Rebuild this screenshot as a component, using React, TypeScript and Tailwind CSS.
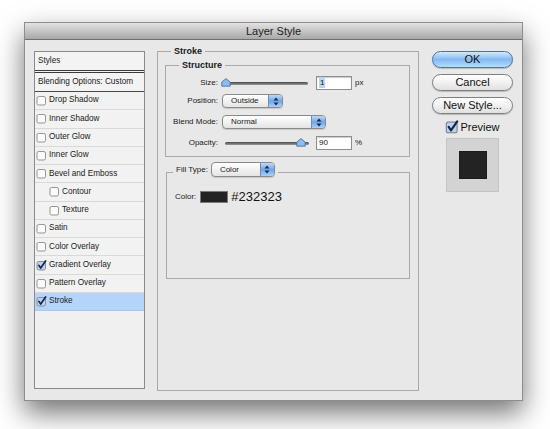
import React from 'react';

const effects = [
  { label: 'Drop Shadow' },
  { label: 'Inner Shadow' },
  { label: 'Outer Glow' },
  { label: 'Inner Glow' },
  { label: 'Bevel and Emboss' },
  { label: 'Contour', indent: true },
  { label: 'Texture', indent: true },
  { label: 'Satin' },
  { label: 'Color Overlay' },
  { label: 'Gradient Overlay', checked: true },
  { label: 'Pattern Overlay' },
  { label: 'Stroke', checked: true, selected: true },
];

function CheckBox({ checked, big }: { checked?: boolean; big?: boolean }) {
  const s = big ? 14 : 11;
  return (
    <svg width={s} height={s} viewBox="0 0 11 11" className="shrink-0">
      <rect
        x="1"
        y="1.5"
        width="8.5"
        height="8.5"
        rx="1.6"
        fill={checked ? '#b9d3f3' : '#fbfbfb'}
        stroke="#7c7c7c"
        strokeWidth="0.8"
      />
      {checked && (
        <path
          d="M2.9 5.4 L4.7 8.1 L9.6 1"
          fill="none"
          stroke="#14254f"
          strokeWidth="1.7"
          strokeLinecap="round"
          strokeLinejoin="round"
        />
      )}
    </svg>
  );
}

function Popup({ value, className }: { value: string; className: string }) {
  return (
    <div
      className={`flex items-stretch rounded-[4px] border border-[#8a8a8a] bg-gradient-to-b from-white to-[#e4e4e4] shadow-[0_1px_1px_rgba(0,0,0,0.15)] ${className}`}
    >
      <span className="flex flex-1 items-center pl-[8px] text-[8px] text-[#1a1a1a]">{value}</span>
      <span className="flex w-[14px] items-center justify-center rounded-r-[3px] border-l border-[#6f8db5] bg-gradient-to-b from-[#bcd9f8] via-[#6ea6ea] to-[#a9d0f8]">
        <svg width="6" height="9" viewBox="0 0 6 9">
          <path d="M3 0.5 L5.5 3.5 H0.5 Z" fill="#1b2a44" />
          <path d="M3 8.5 L5.5 5.5 H0.5 Z" fill="#1b2a44" />
        </svg>
      </span>
    </div>
  );
}

function Slider({ className, at }: { className: string; at: string }) {
  return (
    <div className={`relative flex h-[14px] items-center ${className}`}>
      <div className="h-[3px] w-full rounded-full bg-gradient-to-b from-[#4a4a4a] to-[#9a9a9a]" />
      <svg width="10" height="9" viewBox="0 0 10 9" className={`absolute top-[2px] ${at}`}>
        <path
          d="M5 0.6 L9.2 4 V8.2 H0.8 V4 Z"
          fill="#8fbcf0"
          stroke="#41679b"
          strokeWidth="0.8"
          strokeLinejoin="round"
        />
      </svg>
    </div>
  );
}

function NumField({ value, selected }: { value: string; selected?: boolean }) {
  return (
    <div className="flex h-[14px] w-[36px] items-center border border-[#8e8e8e] bg-white pl-[2px] shadow-[inset_0_1px_1px_rgba(0,0,0,0.2)]">
      <span className={`text-[8px] leading-[10px] text-[#111] ${selected ? 'bg-[#b5d5ff] px-[1px]' : ''}`}>{value}</span>
    </div>
  );
}

function AquaButton({ children, primary }: { children: React.ReactNode; primary?: boolean }) {
  return (
    <button
      className={`flex h-[17px] w-[81px] items-center justify-center rounded-full border text-[11px] leading-none text-[#111] shadow-[0_1px_1px_rgba(0,0,0,0.2)] ${
        primary
          ? 'border-[#4d72a6] bg-gradient-to-b from-[#d6e9fc] via-[#84b9f0] to-[#b6dcfc]'
          : 'border-[#7f7f7f] bg-gradient-to-b from-white via-[#f1f1f1] to-[#e0e0e0]'
      }`}
    >
      {children}
    </button>
  );
}

export default function App() {
  return (
    <div className="h-[429px] w-[550px] bg-white pl-[24px] pt-[22px] font-['Liberation_Sans',Arial,sans-serif]">
      <div className="flex h-[379px] w-[499px] flex-col border border-[#8d8d8d] bg-[#e8e8e8] shadow-[0_12px_26px_rgba(0,0,0,0.55)]">
        {/* Title bar */}
        <div className="flex h-[17px] items-center justify-center border-b border-[#6f6f6f] bg-gradient-to-b from-[#e2e2e2] to-[#a9a9a9] text-[11px] text-[#1c1c1c]">
          Layer Style
        </div>

        <div className="flex items-start pl-[9px]">
          {/* Styles list */}
          <div className="mt-[11px] flex h-[338px] w-[111px] flex-col border border-[#8a8a8a] bg-[#f0f0f0] text-[8.2px] text-[#1a1a1a]">
            <div className="flex h-[21px] items-center border-b-[3px] border-double border-[#3a3a3a] bg-[#f3f3f3] pl-[3px]">
              Styles
            </div>
            <div className="flex h-[19px] items-center border-b border-[#4a4a4a] bg-[#f3f3f3] pl-[3px]">
              Blending Options: Custom
            </div>
            {effects.map((e) => (
              <div
                key={e.label}
                className={`flex h-[18.27px] items-center gap-[2px] border-b ${
                  e.selected ? 'border-[#a8c8f0] bg-[#b5d4fb]' : 'border-[#d9d9d9] bg-[#f2f2f2]'
                } ${e.indent ? 'pl-[14px]' : 'pl-[1px]'}`}
              >
                <CheckBox checked={e.checked} />
                <span>{e.label}</span>
              </div>
            ))}
          </div>

          {/* Stroke */}
          <fieldset className="ml-[12px] mt-[6px] h-[345px] w-[262px] border border-[#a9a9a9] px-[7px]">
            <legend className="ml-[6px] px-[3px] text-[9px] font-bold leading-[11px] text-[#1a1a1a]">Stroke</legend>

            <fieldset className="mt-[3px] h-[97px] w-[245px] border border-[#a9a9a9] p-0">
              <legend className="ml-[13px] px-[3px] text-[9px] font-bold leading-[11px] text-[#1a1a1a]">
                Structure
              </legend>
              <div className="flex flex-col pt-[5px] text-[8px] text-[#1a1a1a]">
                <div className="flex h-[14px] items-center">
                  <span className="w-[53px] pr-[1px] text-right">Size:</span>
                  <Slider className="ml-[3px] w-[86px]" at="left-[-1px]" />
                  <div className="ml-[8px]">
                    <NumField value="1" selected />
                  </div>
                  <span className="ml-[3px]">px</span>
                </div>
                <div className="mt-[4px] flex h-[14px] items-center">
                  <span className="w-[53px] pr-[1px] text-right">Position:</span>
                  <Popup value="Outside" className="ml-[3px] h-[14px] w-[61px]" />
                </div>
                <div className="mt-[7px] flex h-[14px] items-center">
                  <span className="w-[53px] pr-[1px] text-right">Blend Mode:</span>
                  <Popup value="Normal" className="ml-[3px] h-[14px] w-[104px]" />
                </div>
                <div className="mt-[7px] flex h-[14px] items-center">
                  <span className="w-[53px] pr-[1px] text-right">Opacity:</span>
                  <Slider className="ml-[6px] w-[84px]" at="left-[71px]" />
                  <div className="ml-[7px]">
                    <NumField value="90" />
                  </div>
                  <span className="ml-[3px]">%</span>
                </div>
              </div>
            </fieldset>

            <fieldset className="ml-[1px] mt-[5px] h-[117px] w-[244px] border border-[#a9a9a9] p-0">
              <legend className="ml-[6px] flex items-center gap-[3px] px-[3px] pb-[5px] text-[8px] text-[#1a1a1a]">
                <span>Fill Type:</span>
                <Popup value="Color" className="h-[15px] w-[64px]" />
              </legend>
              <div className="mt-[8px] flex items-center pl-[8px]">
                <span className="text-[8px] text-[#1a1a1a]">Color:</span>
                <span className="ml-[4px] h-[12px] w-[28px] border border-[#7a7a7a] bg-[#232323]" />
                <span className="ml-[3px] text-[13px] leading-none text-[#111]">#232323</span>
              </div>
            </fieldset>
          </fieldset>

          {/* Buttons */}
          <div className="ml-[13px] mt-[11px] flex w-[81px] flex-col items-center">
            <AquaButton primary>OK</AquaButton>
            <div className="mt-[6px]">
              <AquaButton>Cancel</AquaButton>
            </div>
            <div className="mt-[6px]">
              <AquaButton>New Style...</AquaButton>
            </div>
            <div className="mt-[6px] flex h-[14px] items-center gap-[1px] text-[11px] text-[#111]">
              <CheckBox checked big />
              <span>Preview</span>
            </div>
            <div className="mt-[4px] flex h-[54px] w-[53px] items-center justify-center border border-[#c4c4c4] bg-[#d3d3d3]">
              <div className="h-[28px] w-[28px] border border-[#1a1a1a] bg-[#232323]" />
            </div>
          </div>
        </div>
      </div>
    </div>
  );
}
